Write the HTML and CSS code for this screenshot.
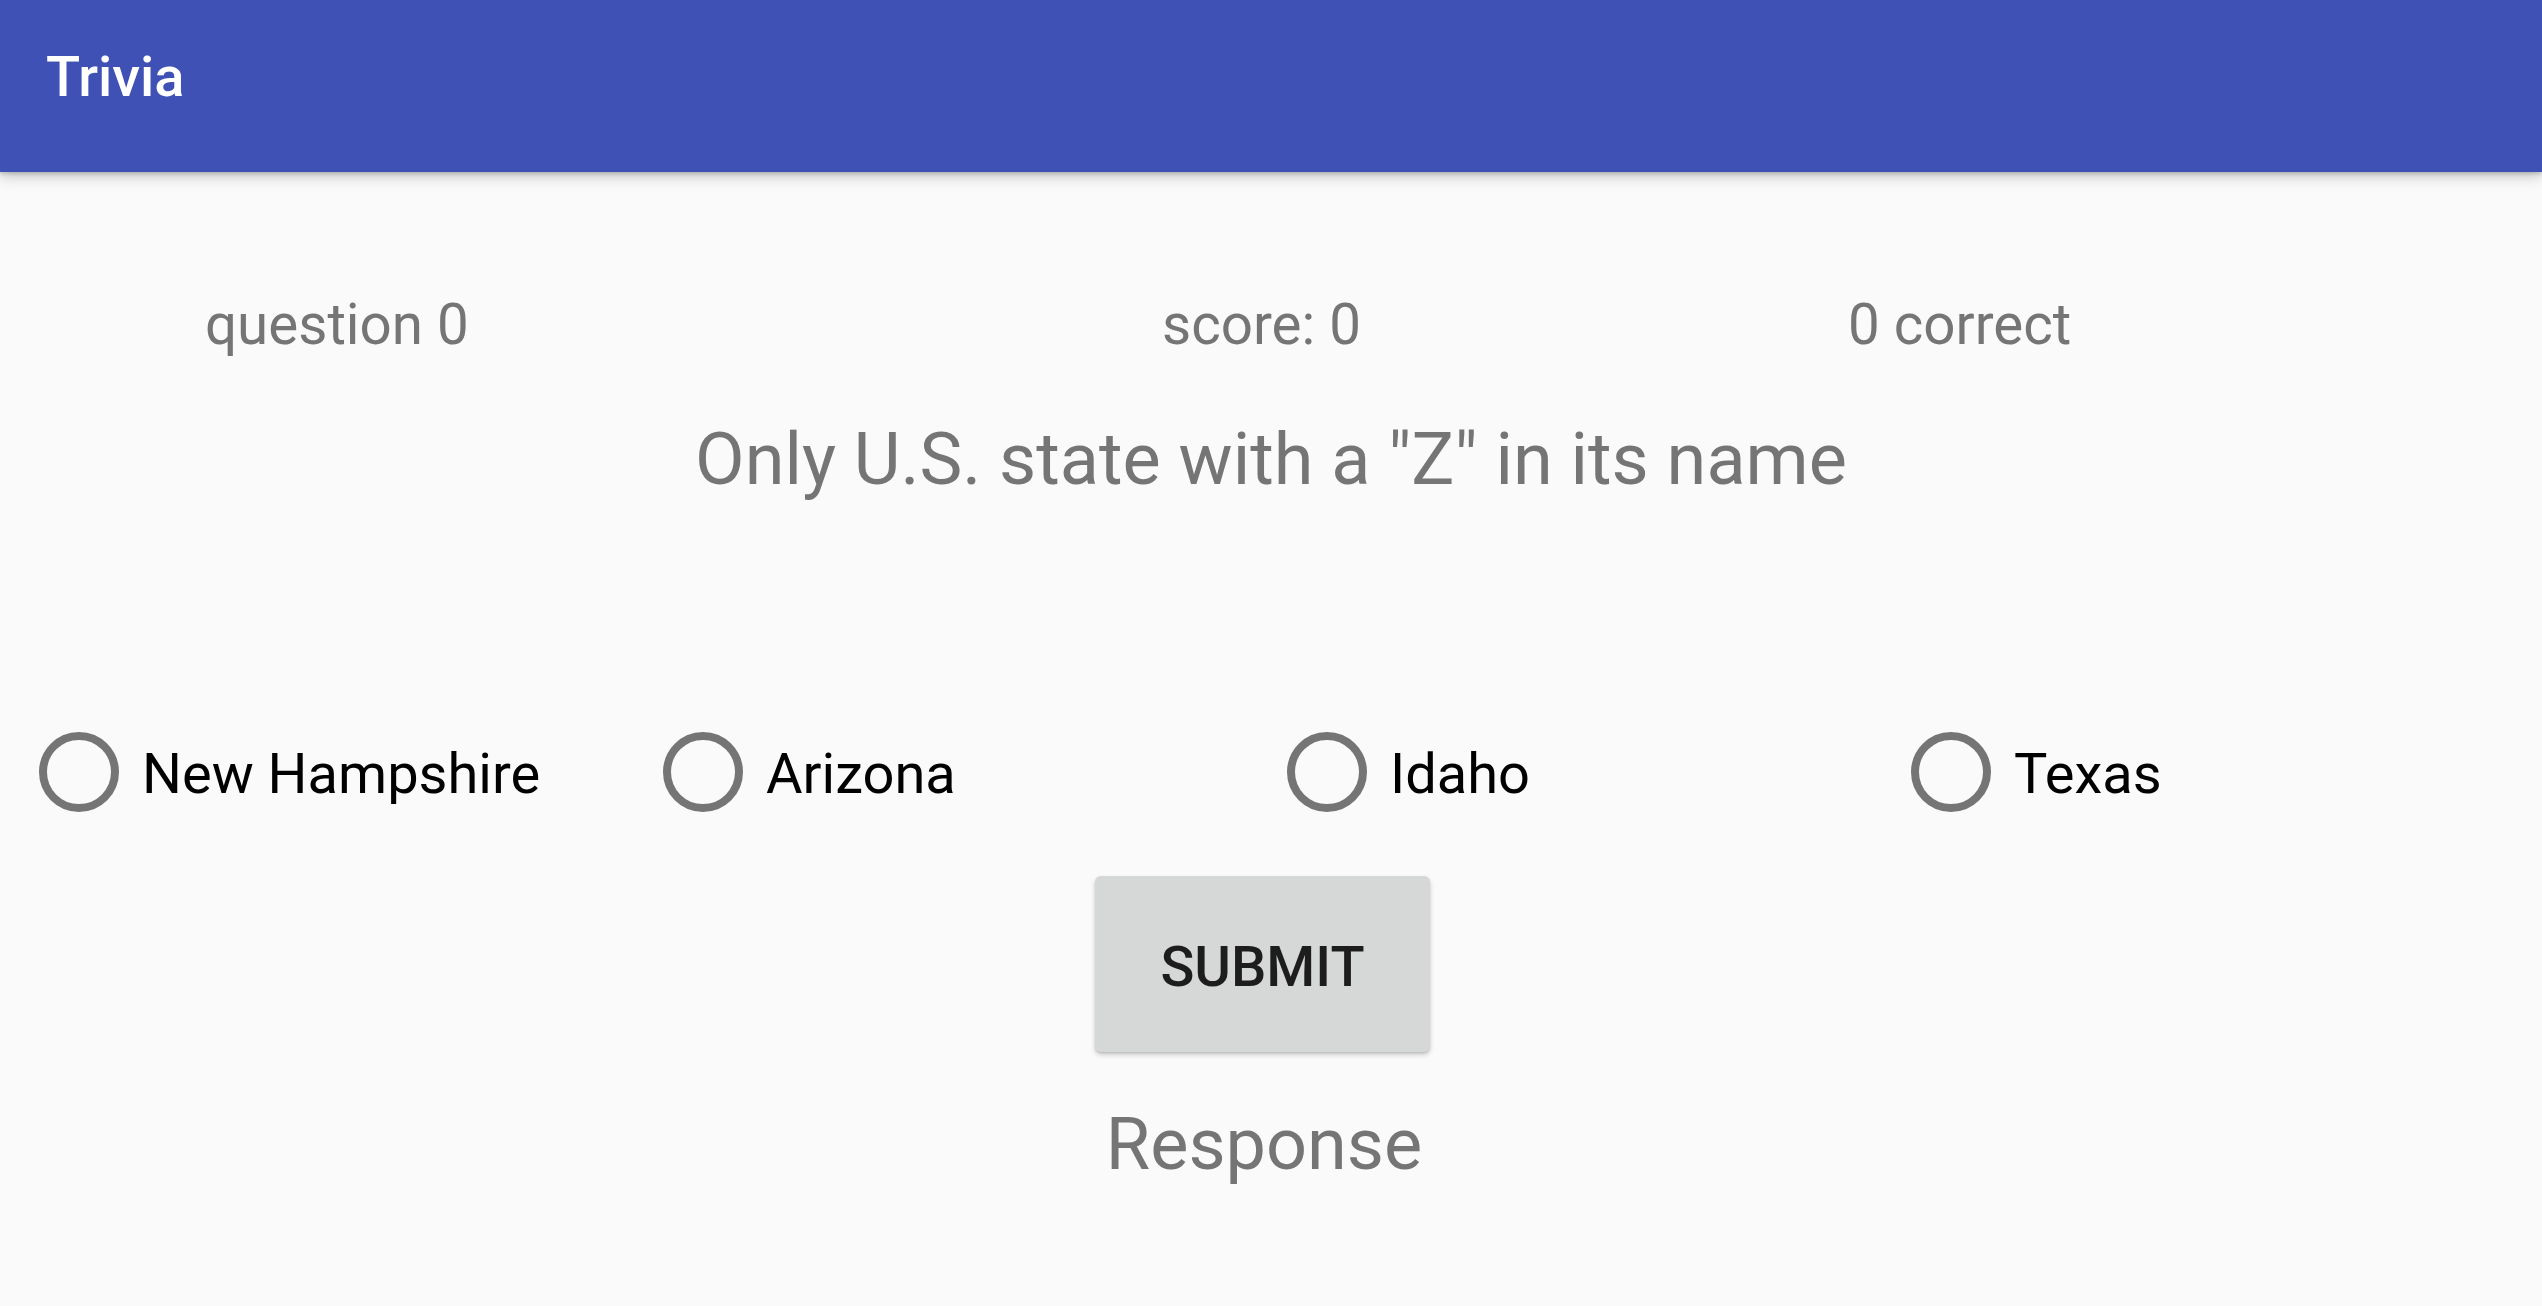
FILE: index.html
```html
<!DOCTYPE html>
<html lang="en">
<head>
<meta charset="utf-8">
<title>Trivia</title>
<link rel="stylesheet" href="styles.css">
</head>
<body>
<header class="appbar">
  <h1 class="appbar-title">Trivia</h1>
</header>
<main class="content">
  <div class="stats">
    <span class="stat">question 0</span>
    <span class="stat">score: 0</span>
    <span class="stat">0 correct</span>
  </div>
  <p class="question">Only U.S. state with a "Z" in its name</p>
  <div class="choices">
    <label class="choice"><span class="radio"></span><span class="choice-text">New Hampshire</span></label>
    <label class="choice"><span class="radio"></span><span class="choice-text">Arizona</span></label>
    <label class="choice"><span class="radio"></span><span class="choice-text">Idaho</span></label>
    <label class="choice"><span class="radio"></span><span class="choice-text">Texas</span></label>
  </div>
  <div class="actions">
    <button class="submit" type="button">SUBMIT</button>
  </div>
  <p class="response">Response</p>
</main>
</body>
</html>
```
FILE: styles.css
```css
html, body {
  margin: 0;
  padding: 0;
}
body {
  background: #fafafa;
  font-family: Roboto, "Liberation Sans", Arial, sans-serif;
  width: 2542px;
  height: 1306px;
  overflow: hidden;
}
.appbar {
  position: relative;
  z-index: 2;
  height: 172px;
  box-sizing: border-box;
  background: #3f51b5;
  padding: 44px 0 0 46px;
  box-shadow: 0 4px 14px rgba(0, 0, 0, 0.22), 0 2px 4px rgba(0, 0, 0, 0.16);
}
.appbar-title {
  margin: 0;
  font-size: 56px;
  font-weight: 500;
  color: #ffffff;
  line-height: normal;
}
.content {
  display: flex;
  flex-direction: column;
}
.stats {
  margin-top: 119px;
  display: grid;
  grid-template-columns: 957px 686px auto;
  padding-left: 205px;
  font-size: 56.5px;
  line-height: 68px;
  color: #757575;
}
.question {
  margin: 57px 0 0;
  text-align: center;
  font-size: 72px;
  line-height: 87px;
  color: #757575;
}
.choices {
  margin-top: 229px;
  display: grid;
  grid-template-columns: repeat(4, 624px);
  padding-left: 39px;
  height: 80px;
}
.choice {
  display: flex;
  align-items: center;
  gap: 23px;
}
.radio {
  width: 80px;
  height: 80px;
  box-sizing: border-box;
  border: 8px solid #757575;
  border-radius: 50%;
  flex: none;
}
.choice-text {
  font-size: 56px;
  line-height: 68px;
  color: #000000;
  padding-top: 4px;
}
.actions {
  margin-top: 64px;
  display: flex;
  justify-content: center;
}
.submit {
  width: 335px;
  height: 176px;
  margin-left: -17px;
  border: none;
  border-radius: 6px;
  background: #d6d7d7;
  color: #1d1d1d;
  font-family: Roboto, "Liberation Sans", Arial, sans-serif;
  font-size: 56px;
  font-weight: 500;
  letter-spacing: 0;
  padding: 6px 0 0;
  box-shadow: 0 3px 5px rgba(0, 0, 0, 0.18), 0 1px 2px rgba(0, 0, 0, 0.12);
}
.response {
  margin: 49px 0 0;
  text-align: center;
  font-size: 72px;
  line-height: 87px;
  color: #757575;
  padding-right: 14px;
}
```
